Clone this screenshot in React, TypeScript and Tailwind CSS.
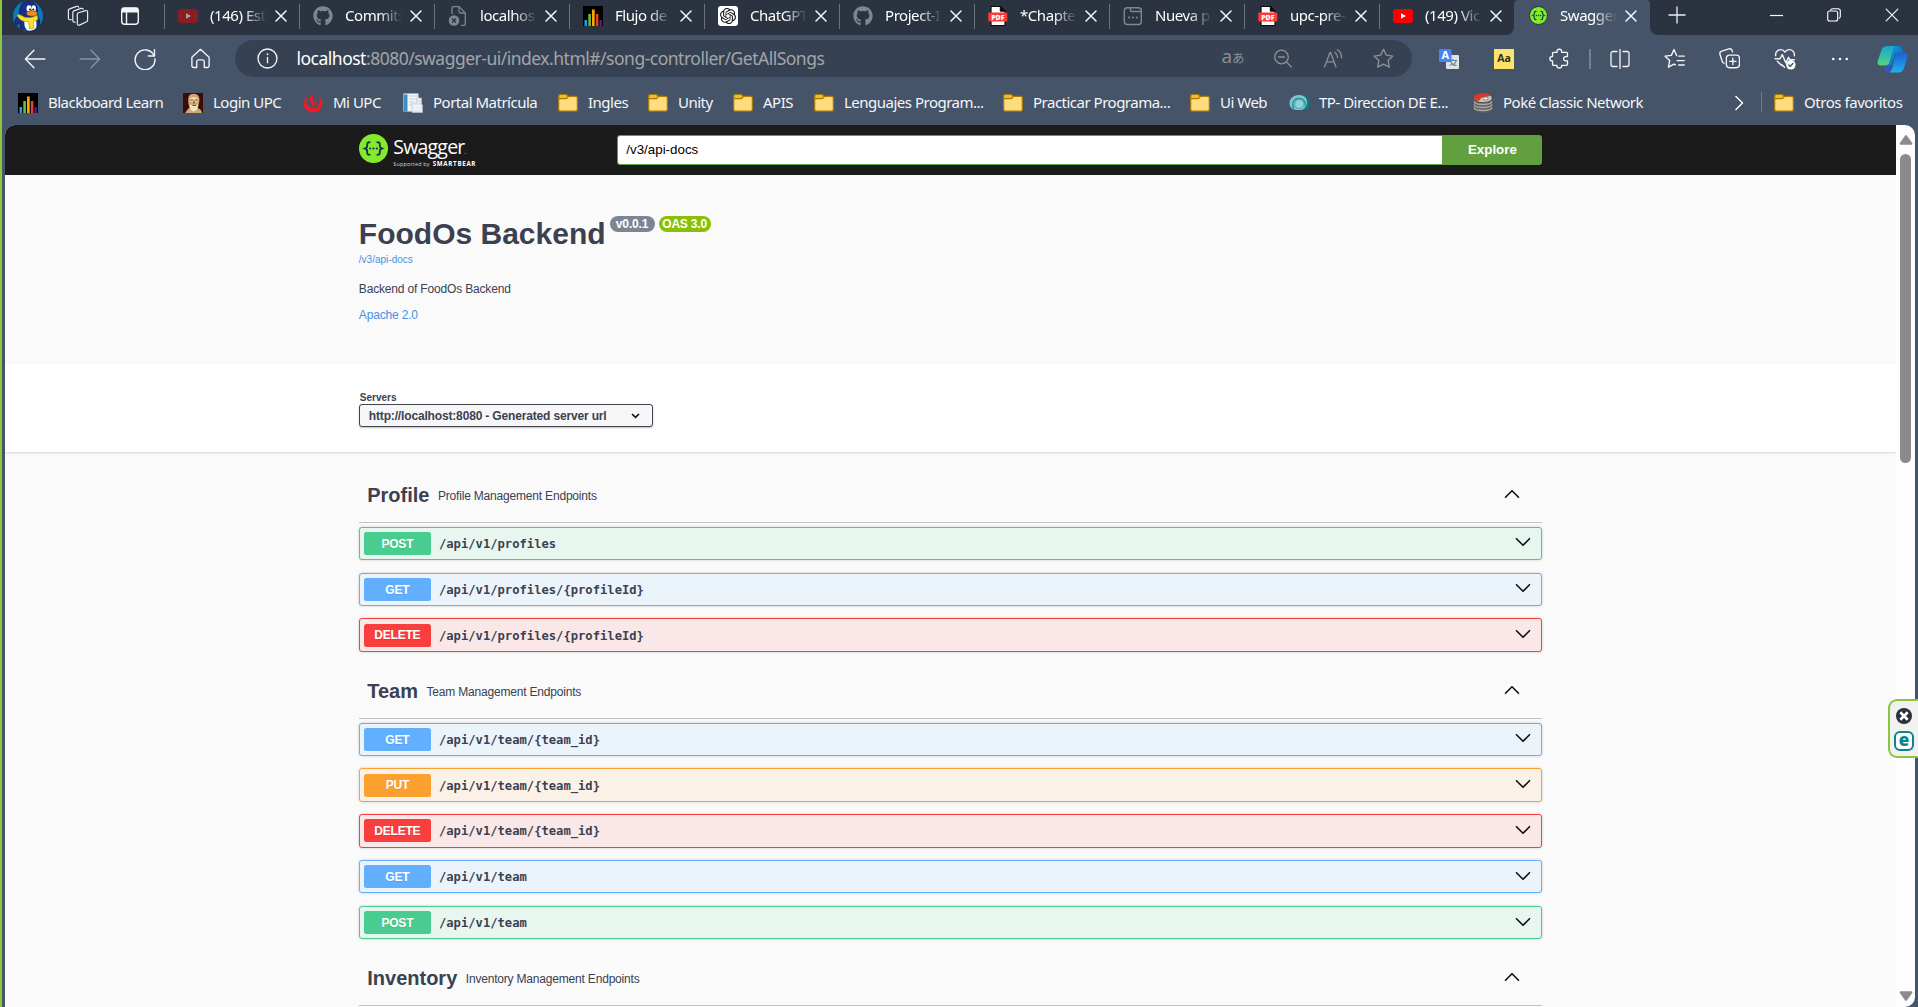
import React from 'react';
import { FaGithub } from 'react-icons/fa';
import { SiOpenai } from 'react-icons/si';

type Kids = { children?: React.ReactNode };

/* ---------- Shared glyphs ---------- */

const Line = ({ size = 20, color = '#f2f4f6', width = 1.3, children }: Kids & { size?: number; color?: string; width?: number }) => (
  <svg className="block shrink-0" width={size} height={size} viewBox="0 0 20 20" fill="none" stroke={color} strokeWidth={width} strokeLinecap="round" strokeLinejoin="round">
    {children}
  </svg>
);

const YouTube = ({ color = '#ff0000', tri = '#ffffff' }) => (
  <svg className="block" width="20" height="20" viewBox="0 0 20 20">
    <rect x="0" y="3" width="20" height="14" rx="3" fill={color} />
    <path d="M8 7.2v5.6l5-2.8z" fill={tri} />
  </svg>
);

const Bars = () => (
  <svg className="block" width="20" height="20" viewBox="0 0 20 20">
    <rect width="20" height="20" fill="#000" />
    <rect x="1.5" y="14" width="2.6" height="6" fill="#1ba0e8" />
    <rect x="5.3" y="8" width="2.6" height="12" fill="#78b833" />
    <rect x="9" y="3.5" width="2.7" height="16.5" fill="#f5a800" />
    <rect x="12.8" y="8" width="2.6" height="12" fill="#e8432a" />
    <rect x="16.4" y="14" width="2.4" height="6" fill="#5b1f8a" />
  </svg>
);

const BrokenPage = () => (
  <svg className="block" width="20" height="20" viewBox="0 0 20 20" fill="none" stroke="#7e868f" strokeWidth="1.3">
    <path d="M4 8V2.2A1.6 1.6 0 0 1 5.600.6H11L17.300 7v11A1.600 1.600 0 0 1 15.700 19.500H13" />
    <path d="M11 .6V5.400A1.600 1.600 0 0 0 12.600 7H17" />
    <circle cx="6" cy="14.500" r="5.300" fill="#7e868f" stroke="none" />
    <path d="M4 12.500l4 4M8 12.500l-4 4" stroke="#2b3440" />
  </svg>
);

const Pdf = () => (
  <svg className="block" width="20" height="20" viewBox="0 0 20 20">
    <path d="M3 .5h9.500L17 5v14.500H3z" fill="#fff" stroke="#0c0c0c" strokeWidth="1.2" />
    <path d="M12.300 .5V5.200H17" fill="#0c0c0c" stroke="#0c0c0c" />
    <rect x="0.300" y="6.600" width="19" height="9" rx="1" fill="#fb3b3b" />
    <text x="9.800" y="13.700" textAnchor="middle" fontFamily="Open Sans, sans-serif" fontWeight="800" fontSize="7" fill="#fff">PDF</text>
  </svg>
);

const NewTabIcon = () => (
  <Line color="#7e868f" width={1.4}>
    <rect x="1.300" y="1.700" width="17" height="16.800" rx="3" />
    <path d="M7.500 2v2a1.500 1.500 0 0 0 1.500 1.500h9" />
    <path d="M6 11.500h.1M9.900 11.500h.1M13.800 11.500h.1" strokeWidth="2" />
  </Line>
);

const SwaggerMark = ({ size = 20, ring = '#85ea2d', ringWidth = 0 }) => (
  <svg className="block shrink-0" width={size} height={size} viewBox="0 0 30 30" fill="none" stroke="#173647" strokeWidth="1.900" strokeLinecap="round">
    <circle cx="15" cy="15" r={15 - ringWidth / 2} fill="#85ea2d" stroke={ring} strokeWidth={ringWidth} />
    <path d="M11 8.500c-2.300 0-2.600 1-2.500 2.600.1 2.300 0 3.300-2 3.900 2 .6 2.100 1.600 2 3.900-.1 1.600.2 2.600 2.500 2.600" />
    <path d="M19 8.500c2.300 0 2.600 1 2.500 2.600-.1 2.300 0 3.300 2 3.900-2 .6-2.100 1.600-2 3.900.1 1.600-.2 2.600-2.500 2.600" />
    <path d="M11.600 15h.01M15 15h.01M18.400 15h.01" strokeWidth="2.300" />
  </svg>
);

const Folder = () => (
  <svg className="block" width="20" height="20" viewBox="0 0 20 20" stroke="#a97a0a" strokeWidth="1.200">
    <path d="M.7 4.500V16.700A1.400 1.400 0 0 0 2.100 18.100H17.900a1.400 1.400 0 0 0 1.400-1.400V4.700A1.400 1.400 0 0 0 17.900 3.300H10.500L8.300 5.500H2" fill="#ffdc7c" />
    <path d="M.7 5.600V3A1.600 1.600 0 0 1 2.300 1.500h6l2 2-2 2.100z" fill="#f3bd2b" />
  </svg>
);

const Close = ({ size = 12, w = 1.5 }) => (
  <svg className="block shrink-0" width={size} height={size} viewBox="0 0 12 12" stroke="#f4f6f8" strokeWidth={w} strokeLinecap="round">
    <path d="M1 1l10 10M11 1L1 11" />
  </svg>
);

/* ---------- Browser tabs ---------- */

const Penguin = () => (
  <svg className="block" width="30" height="30" viewBox="0 0 30 30">
    <defs><clipPath id="pc"><circle cx="15" cy="15" r="15" /></clipPath></defs>
    <g clipPath="url(#pc)">
      <rect width="30" height="30" fill="#0b78bd" />
      <path d="M10 2c3-3 13-2 14 5l1 9c2 3 2 8 0 12H8c-1-2-1-5-.5-7L3 25c-2-3-1-7 3-11 1-2 .5-9 4-12z" fill="#1b2f86" stroke="#0a1640" strokeWidth=".8" />
      <path d="M11 18h12l.5 6c0 4-3 6-6 6s-6-3-6-6z" fill="#fff" />
      <ellipse cx="16" cy="7.500" rx="2.500" ry="3.300" fill="#fff" />
      <ellipse cx="20.700" cy="7.500" rx="2.200" ry="3.300" fill="#fff" />
      <circle cx="17" cy="8.500" r="1" fill="#111" /><circle cx="20.300" cy="8.500" r="1" fill="#111" />
      <ellipse cx="19" cy="12.500" rx="5.500" ry="2.700" fill="#f08c1c" stroke="#8a4a08" strokeWidth=".6" />
      <path d="M4 14c2-1 4 0 7 2 4 1 9 1 13-2l1 4c-1 1.500-3 2-4.500 2l.5 7-4.500 1-1-7.500C10 21.500 5.500 18 4 14z" fill="#fbe22c" stroke="#a88d00" strokeWidth=".6" />
    </g>
  </svg>
);

const tabs: { icon: React.ReactNode; label: string }[] = [
  { icon: <YouTube color="#8a1d24" tri="#a8a3a6" />, label: '(146) Est' },
  { icon: <FaGithub size={20} color="#7e868f" />, label: 'Commits' },
  { icon: <BrokenPage />, label: 'localhos' },
  { icon: <Bars />, label: 'Flujo de' },
  {
    icon: <span className="flex size-5 items-center justify-center rounded-[3px] bg-white"><SiOpenai size={16} color="#111" /></span>,
    label: 'ChatGPT',
  },
  { icon: <FaGithub size={20} color="#7e868f" />, label: 'Project-I' },
  { icon: <Pdf />, label: '*Chapte' },
  { icon: <NewTabIcon />, label: 'Nueva p' },
  { icon: <Pdf />, label: 'upc-pre-' },
  { icon: <YouTube />, label: '(149) Vic' },
];

const TabBody = ({ icon, label }: { icon: React.ReactNode; label: string }) => (
  <>
    <span className="flex w-5 shrink-0 justify-center">{icon}</span>
    <span className="-mt-[2px] ml-3 w-[56px] shrink-0 whitespace-nowrap text-[15px] leading-5 tracking-[-0.450px] text-white [mask-image:linear-gradient(to_right,#000_60%,transparent_102%)]">
      {label}
    </span>
    <span className="ml-[8.500px]"><Close /></span>
  </>
);

const TabStrip = () => (
  <div className="flex h-[35px] bg-[#2a333f]">
    <div className="flex h-[31px] w-[162px] shrink-0 items-center pl-[11px]">
      <Penguin />
      <span className="ml-[24px]">
        <svg className="block" width="22" height="22" viewBox="0 0 22 22" fill="none" stroke="#e8ebee" strokeWidth="1.200" strokeLinejoin="round" strokeLinecap="round">
          <path d="M10.300 9.300a1.500 1.500 0 0 1 1.100-1.500l7.200-2.200a1.500 1.500 0 0 1 2 1.400v8.300a1.700 1.700 0 0 1-1 1.500l-7.200 3.300a1.500 1.500 0 0 1-2.100-1.400z" />
          <path d="M8 17.200c-1.300.2-2.200-.6-2.200-1.700V7.500a1.700 1.700 0 0 1 1.200-1.600l7-2.500c1-.3 1.900 0 2.200.8" />
          <path d="M4.200 14.600c-1.600.5-2.800-.3-2.800-1.600V5.500a1.700 1.700 0 0 1 1.200-1.600l7-2.500c1-.3 1.900 0 2.200.8" />
        </svg>
      </span>
      <span className="ml-[31px]">
        <svg className="block" width="20" height="20" viewBox="0 0 20 20" fill="none" stroke="#f4f6f8" strokeWidth="1.400">
          <rect x="1.700" y="1.900" width="16.600" height="16.400" rx="3" />
          <path d="M2.500 2.500h15v3.300h-15z" fill="#f4f6f8" />
          <path d="M6.500 6v12" />
        </svg>
      </span>
    </div>
    {tabs.map((t, i) => (
      <div key={i} className="flex h-[31px] w-[135px] shrink-0 items-center">
        <span className="mt-[1px] h-[25px] w-px bg-[#6a727c]" />
        <span className="ml-[13px] flex items-center"><TabBody {...t} /></span>
      </div>
    ))}
    <div className="-ml-[8px] flex h-[35px] w-2 shrink-0 items-end bg-[#455468]"><span className="h-full w-2 rounded-br-[8px] bg-[#2a333f]" /></div>
    <div className="h-[35px] w-[136px] shrink-0 rounded-t-[4px] bg-[#455468] pl-[14px]">
      <div className="flex h-[31px] items-center"><TabBody icon={<SwaggerMark size={19} ring="#173647" ringWidth={1.5} />} label="Swagger" /></div>
    </div>
    <div className="h-[35px] w-2 bg-[#455468]"><span className="block h-full w-2 rounded-bl-[8px] bg-[#2a333f]" /></div>
    <div className="flex h-[30px] flex-1 items-center pl-[10px]">
      <svg width="18" height="18" viewBox="0 0 18 18" stroke="#eef0f2" strokeWidth="1.300"><path d="M9 .5v17M.5 9h17" /></svg>
      <svg className="ml-[84px]" width="13" height="13" viewBox="0 0 13 13" stroke="#fff" strokeWidth="1.200"><path d="M0 6.500h13" /></svg>
      <svg className="ml-[44px]" width="14" height="14" viewBox="0 0 14 14" fill="none" stroke="#fff" strokeWidth="1.100">
        <rect x=".7" y="3" width="10" height="10" rx="2" />
        <path d="M3.500 2.500A2 2 0 0 1 5.300.7H11A2.300 2.300 0 0 1 13.300 3v5.500a2 2 0 0 1-1.600 1.900" />
      </svg>
      <span className="ml-[44px]"><Close size={14} w={1.050} /></span>
    </div>
  </div>
);

/* ---------- Address bar ---------- */

const Cell = ({ children }: Kids) => <span className="flex w-[55px] shrink-0 items-center justify-center">{children}</span>;
const PillCell = ({ children }: Kids) => <span className="flex w-[50px] shrink-0 items-center justify-center">{children}</span>;

const Toolbar = () => (
  <div className="flex h-[47px] items-center pl-[5.500px]">
    <Cell><Line size={22}><path d="M19 10H1.500M9 2L1.300 10 9 18" /></Line></Cell>
    <Cell><Line size={22} color="#8692a2"><path d="M1 10h17.500M11 2l7.700 8L11 18" /></Line></Cell>
    <Cell>
      <Line size={22}><path d="M18.300 7.200A9 9 0 1 0 19 10" /><path d="M18.600 1.500v5.700H13" /></Line>
    </Cell>
    <Cell>
      <Line size={21}><path d="M1.800 8.700 10 1.200l8.200 7.500V17a1.600 1.600 0 0 1-1.600 1.600h-3V13a1.700 1.700 0 0 0-1.700-1.700H8.100A1.700 1.700 0 0 0 6.400 13v5.600h-3A1.600 1.600 0 0 1 1.800 17z" /></Line>
    </Cell>
    <div className="ml-[7.500px] flex h-[37px] w-[1177px] shrink-0 items-center rounded-full bg-[#364253] pl-[22px] pr-[4px]">
      <Line size={21}><circle cx="10" cy="10" r="9" /><path d="M10 9v5" /><path d="M10 6h.01" strokeWidth="1.800" /></Line>
      <span className="-mt-px ml-[18.500px] flex-1 whitespace-nowrap text-[17.500px] leading-6 tracking-[-0.500px] text-[#a3a5a8]">
        <span className="text-white">localhost</span>:8080/swagger-ui/index.html#/song-controller/GetAllSongs
      </span>
      <PillCell>
        <span className="-mt-[2px] flex items-baseline whitespace-nowrap font-['Open_Sans','Noto_Sans_CJK_JP',sans-serif] leading-6 text-[#8b9096]"><span className="text-[19px]">a</span><span className="text-[12.500px]">あ</span></span>
      </PillCell>
      <PillCell><Line color="#8b9096"><circle cx="8.500" cy="8" r="6.800" /><path d="M5.500 8h6M13.500 13l5 5" /></Line></PillCell>
      <PillCell>
        <Line color="#8b9096"><path d="M1.500 18 7 3.500h.6L13 18M3.500 12.800h7.600" /><path d="M12 3.500a6 6 0 0 1 2.500 5M14.500.8a9 9 0 0 1 4 8" /></Line>
      </PillCell>
      <PillCell>
        <Line color="#8b9096" size={21}><path d="M10 1.200l2.700 5.600 6.200.9-4.500 4.300 1.100 6.200L10 15.300l-5.500 2.900L5.600 12 1.100 7.700l6.200-.9z" /></Line>
      </PillCell>
    </div>
    <span className="ml-[9.500px] flex">
      <Cell>
        <svg width="20" height="20" viewBox="0 0 20 20">
          <rect x="7" y="6" width="13" height="14" rx="1" fill="#dfe3e8" />
          <path d="M10 11.500h8M14 10v1.500M10.500 16c4 0 6-1.500 6.500-4M11.500 12c1 3 3.500 4.500 6 4.500" stroke="#6b7f93" strokeWidth="1.200" fill="none" />
          <rect width="12.500" height="13" rx="1" fill="#4285f4" />
          <text x="6.200" y="10.300" textAnchor="middle" fontFamily="Open Sans, sans-serif" fontWeight="700" fontSize="11" fill="#fff">A</text>
        </svg>
      </Cell>
      <Cell><span className="flex size-5 items-center justify-center bg-[#ffe26a] font-['Open_Sans',sans-serif] text-[10.500px] font-bold text-[#2b2b2b]">Aa</span></Cell>
      <Cell>
        <Line size={21}><path d="M4.200 4.200h3.400c-.5-1.800.5-3 2.200-3s2.700 1.200 2.200 3h4.800a.8.8 0 0 1 .8.800v3.200c-2-.4-3.700.3-3.700 2s1.700 2.400 3.700 2V15.500a1 1 0 0 1-1 1H12c.4 1.500-.6 2.600-2.200 2.600s-2.600-1.100-2.200-2.600H4.200a.8.8 0 0 1-.8-.8v-3.300c-1.500 0-2.600-.8-2.600-2.200S1.900 8 3.400 8V5a.8.8 0 0 1 .8-.8z" /></Line>
      </Cell>
    </span>
    <span className="ml-[2.500px] h-5 w-[2px] shrink-0 bg-[#76818f]" />
    <span className="ml-[1px] flex items-center">
      <Cell><Line size={20}><path d="M7 2.500H3A2 2 0 0 0 1 4.500v11a2 2 0 0 0 2 2h4M13 2.500h4a2 2 0 0 1 2 2v11a2 2 0 0 1-2 2h-4M10 .5v19" /></Line></Cell>
      <Cell><Line size={21}><path d="M12 7.200 9.500 1.500 7 7 1 7.800l4.400 4.200-1.200 6.300L9.500 15.300l1.300.8M14 7.800h5.300M12.500 12h6.800M14 16.200h5.300" /></Line></Cell>
      <Cell>
        <Line size={21}>
          <rect x="7" y="6.800" width="12.500" height="12" rx="3" /><path d="M13.200 9.800v6M10.200 12.800h6" />
          <path d="M4.800 14.500A3 3 0 0 1 3 12.600L.9 6A2.500 2.500 0 0 1 2.600 3L9.500.9a2.500 2.500 0 0 1 3 1.500l.4 1.300" />
        </Line>
      </Cell>
      <Cell>
        <Line size={22}>
          <path d="M9.500 17.500 7 15M1.500 7C1 3.800 3.300 1.500 6 1.500c1.800 0 3.200.8 4 2.200.8-1.400 2.200-2.200 4-2.200 2.700 0 5 2.300 4.500 5.500M1 9.800h4.500L7.500 6l3.300 7.500 2.400-5 1.300 2.200h4" />
          <path d="M3 12l4 4" />
          <circle cx="15.300" cy="15.300" r="4.300" fill="#fff" stroke="none" />
          <path d="M13.500 15.400l1.300 1.300 2.400-2.500" stroke="#455468" />
        </Line>
      </Cell>
      <Cell><Line size={18}><path d="M2.500 10h.01M10 10h.01M17.500 10h.01" strokeWidth="3" /></Line></Cell>
    </span>
    <svg className="ml-[10px] shrink-0" width="31" height="28" viewBox="0 0 31 28">
      <defs>
        <linearGradient id="ca" x1="0" y1="0" x2="0" y2="1"><stop offset="0" stopColor="#18a4d8" /><stop offset=".5" stopColor="#2fbfa9" /><stop offset="1" stopColor="#5ad27c" /></linearGradient>
        <linearGradient id="cb" x1="0" y1="0" x2="0" y2="1"><stop offset="0" stopColor="#1b5fd0" /><stop offset="1" stopColor="#1fb2f2" /></linearGradient>
        <linearGradient id="cc" x1="0" y1="0" x2="1" y2="1"><stop offset="0" stopColor="#12a8e0" /><stop offset="1" stopColor="#0d4fae" /></linearGradient>
      </defs>
      <path d="M11 1h11c2.500 0 3 2 3.500 4l1 3h-8l-3 9-4 10c-2 0-3-2-3.500-4z" fill="url(#cc)" />
      <path d="M10 1h8.500c-1.800 1-2.500 3-3 5l-3 11c-.6 2-2 3.500-4 3.500H4C1.500 20.500 0 18.500.7 16L4.500 5C5.300 2.500 7.500 1 10 1z" fill="url(#ca)" />
      <path d="M21 27.500h-9c2-1 2.700-3 3.300-5l3-11.500c.5-2 2-3.500 4-3.500H27c2.700 0 4 2 3.400 4.500L27 23c-.8 3-3 4.500-6 4.500z" fill="url(#cb)" />
      <path d="M8 20.500h6l-1 4c-.6 2-1.500 2.700-2.800 2.300z" fill="#2a52e0" />
    </svg>
  </div>
);

/* ---------- Bookmarks ---------- */

const Face = () => (
  <svg className="block" width="20" height="20" viewBox="0 0 20 20">
    <rect width="20" height="20" fill="#3c0c0a" />
    <path d="M2 20l2.500-3.500 2-2L5.500 11C5 8 5 5 6 3c1.500-2.800 7.500-3 9.500 0 1.500 2.500 1 6 0 9l-.5 3 3 2 1 3z" fill="#cfa878" />
    <path d="M7 5c2-1.500 5-1.500 7.500 0v4h-7z" fill="#f0d9ae" />
    <path d="M6.500 11.500c2 1 6.500 1 8.500 0l-1 5c-2 2.500-4.500 2.500-6.500 0z" fill="#f3e2c0" />
    <path d="M7.500 7h2.500M12 7h2.500M11 7.500v3M9.500 12.500h3.500" stroke="#6f4422" strokeWidth="1.200" />
  </svg>
);
const Flame = () => (
  <svg className="block" width="20" height="20" viewBox="0 0 20 20" fill="#ed1c24">
    <path d="M4.500 3C-2 7.500-.5 19 10 19.500 20.500 19 22 7.500 15.500 3c2 4 1.500 8-1 10.500-2.500 2.300-6.500 2.300-9 0C3 11 2.500 7 4.500 3z" />
    <path d="M11 .3C7.500 3 5.500 6 7.500 9c1 1.500 2.300 2.500 2 5.300 2-1 2.800-3 1.700-5.300C10 6.500 9.300 4 11 .3z" />
    <path d="M12.300 6.300c-.6 2 1.500 3.500 0 7C14.500 11.500 14.500 8.500 12.300 6.300z" />
  </svg>
);
const Docs = () => (
  <svg className="block" width="20" height="20" viewBox="0 0 20 20">
    <rect x=".5" y=".5" width="15" height="18" fill="#f3f6f9" />
    <rect x="1" y="1.500" width="3.500" height="17" fill="#3d8fc6" />
    <path d="M6 3h9M6 6h9M6 9h5M6 12h3" stroke="#c3cfda" />
    <path d="M8.500 10h5v-5h5v6l1 1v7.500H9z" fill="#e2e7ec" stroke="#c2c9d0" strokeWidth=".6" />
    <path d="M10 13h8M10 16h8" stroke="#fff" />
  </svg>
);
const TealOrb = () => (
  <svg className="block" width="21" height="20" viewBox="0 0 21 20">
    <path d="M12 3c5-1 8.500 2 8.500 7s-3.500 7-7 7z" fill="#067f82" />
    <path d="M10 2c5 0 8 3 8 7.500 0 4-3 7-6 7.500H8C3 17 .5 14 .5 10S4 2 10 2z" fill="#7cc7cd" />
    <path d="M5 15.500a6.300 6.300 0 1 1 11-2" fill="none" stroke="#2b8f98" strokeWidth="1.300" />
    <circle cx="10.300" cy="11" r="4.600" fill="#8ad4d6" stroke="#3d9fa6" strokeWidth=".8" />
  </svg>
);
const PokeStack = () => (
  <svg className="block" width="20" height="20" viewBox="0 0 20 20">
    <path d="M.7 5v11c0 5 18.600 5 18.600 0V5z" fill="#5f5f5f" />
    <path d="M1 8.500c1 4 17 4 18 0M1 11.500c1 4 17 4 18 0M1 14.500c1 4 17 4 18 0" stroke="#a9a9a9" fill="none" strokeWidth="1.300" />
    <ellipse cx="10" cy="5" rx="9.300" ry="4.600" fill="#c4c4c4" stroke="#333" strokeWidth=".6" />
    <path d="M1 5C1 2 5 .3 10 .3c3.500 0 7 .6 8 2.500l-4.500 1C10 3.300 7.500 4.500 6.500 7.500L3 8z" fill="#d93a22" />
    <ellipse cx="12.500" cy="5.500" rx="2.500" ry="1.500" fill="#fff" stroke="#444" strokeWidth=".6" />
  </svg>
);

const bookmarks: { icon: React.ReactNode; label: string; box: string }[] = [
  { icon: <Bars />, label: 'Blackboard Learn', box: 'w-[165px]' },
  { icon: <Face />, label: 'Login UPC', box: 'w-[120px]' },
  { icon: <Flame />, label: 'Mi UPC', box: 'w-[100px]' },
  { icon: <Docs />, label: 'Portal Matrícula', box: 'w-[155px]' },
  { icon: <Folder />, label: 'Ingles', box: 'w-[90px]' },
  { icon: <Folder />, label: 'Unity', box: 'w-[85px]' },
  { icon: <Folder />, label: 'APIS', box: 'w-[81px]' },
  { icon: <Folder />, label: 'Lenguajes Program...', box: 'w-[189px]' },
  { icon: <Folder />, label: 'Practicar Programa...', box: 'w-[187px]' },
  { icon: <Folder />, label: 'Ui Web', box: 'w-[99px]' },
  { icon: <TealOrb />, label: 'TP- Direccion DE E...', box: 'w-[184px]' },
  { icon: <PokeStack />, label: 'Poké Classic Network', box: 'w-[261px]' },
];

const Bookmarks = () => (
  <div className="flex h-[43px] items-center whitespace-nowrap pb-[1px] pl-4 text-[15px] leading-5 tracking-[-0.500px] text-[#f5f7f9]">
    {bookmarks.map((b) => (
      <div key={b.label} className={`flex shrink-0 items-center ${b.box}`}>
        <span className="w-[30px] shrink-0">{b.icon}</span>
        <span className="-mt-[2px]">{b.label}</span>
      </div>
    ))}
    <svg width="10" height="16" viewBox="0 0 10 16" fill="none" stroke="#fff" strokeWidth="1.400"><path d="M1.500 1l7 7-7 7" /></svg>
    <span className="mb-[3px] ml-[17px] h-5 w-px bg-[#6f7b8b]" />
    <span className="ml-[12px] w-[30px]"><Folder /></span>
    <span className="-mt-[2px] tracking-[-0.450px]">Otros favoritos</span>
  </div>
);

/* ---------- Swagger page ---------- */

type Method = 'POST' | 'GET' | 'PUT' | 'DELETE';

const rowTone: Record<Method, string> = {
  POST: 'border-[#49cc90] bg-[#e8f6f0]',
  GET: 'border-[#61affe] bg-[#ebf3fb]',
  PUT: 'border-[#fca130] bg-[#fbf1e6]',
  DELETE: 'border-[#f93e3e] bg-[#fae7e7]',
};
const badgeTone: Record<Method, string> = {
  POST: 'bg-[#49cc90]',
  GET: 'bg-[#61affe]',
  PUT: 'bg-[#fca130]',
  DELETE: 'bg-[#f93e3e]',
};

const Chevron = ({ up = false }) => (
  <svg className="block shrink-0" width="16" height="10" viewBox="0 0 16 10" fill="none" stroke="#111" strokeWidth="1.600" strokeLinejoin="round" strokeLinecap="round">
    <path d={up ? 'M1.500 8.300 8 1.700l6.500 6.600' : 'M1.500 1.700 8 8.300l6.500-6.600'} />
  </svg>
);

const Operation = ({ method, path }: { method: Method; path: string }) => (
  <div className={`mb-[12.500px] flex h-[33.330px] items-center rounded-[3px] border pl-[4.200px] pr-[10px] shadow-[0_0_3px_rgba(0,0,0,0.19)] ${rowTone[method]}`}>
    <span className={`flex h-[23px] w-[66.670px] items-center justify-center rounded-[2.500px] pt-[0.600px] text-[12px] font-bold tracking-[-0.200px] text-white [text-shadow:0_1px_0_rgba(0,0,0,0.1)] ${badgeTone[method]}`}>
      {method}
    </span>
    <span className="ml-[8.300px] mt-[1.300px] flex-1 font-['DejaVu_Sans_Mono',monospace] text-[12.170px] font-bold">{path}</span>
    <span className="mb-[2px]"><Chevron /></span>
  </div>
);

const Section = ({ title, note, ops = [] }: { title: string; note: string; ops?: [Method, string][] }) => (
  <section>
    <div className="mb-[3.900px] flex h-[54.430px] items-center border-b border-[#3b4151]/30 pl-[8.400px] pr-[22px]">
      <h3 className="text-[20px] font-bold leading-6">{title}</h3>
      <p className="ml-[8.500px] flex-1 pt-[1px] text-[12px] leading-4 tracking-[-0.190px]">{note}</p>
      <span className="mb-[3px]"><Chevron up /></span>
    </div>
    {ops.map(([m, p], i) => <Operation key={i} method={m} path={p} />)}
  </section>
);

const SwaggerPage = () => (
  <div className="h-full flex-1 overflow-hidden bg-[#fafafa] font-['Liberation_Sans',sans-serif] text-[#3b4151]">
    <div className="h-[50px] bg-[#1b1b1b]">
      <div className="mx-auto flex h-full w-[1183.300px] items-center">
        <div className="flex w-[258px] shrink-0">
          <span className="-mt-px"><SwaggerMark size={29} /></span>
          <div className="-mt-[2px] ml-[5.500px] flex h-[33px] flex-col whitespace-nowrap font-['Open_Sans',sans-serif] text-white">
            <span className="text-[19.500px] leading-7 tracking-[-0.800px]">Swagger<span className="text-[6px] leading-none">.</span></span>
            <span className="-mt-[1px] flex items-baseline text-[5.400px] leading-[8px] tracking-[0.200px] text-[#d8d8d8]">
              Supported by<b className="ml-[3px] text-[6.200px] leading-[6px] tracking-[0.700px] text-white">SMARTBEAR</b>
            </span>
          </div>
        </div>
        <div className="flex h-[30px] flex-1">
          <div className="flex flex-1 items-center rounded-l-[3px] border border-[#62a03f] bg-white pl-[8.500px] text-[13.330px] text-black">/v3/api-docs</div>
          <div className="flex w-[99.500px] items-center justify-center rounded-r-[3px] bg-[#62a03f] text-[13.330px] font-bold text-white">Explore</div>
        </div>
      </div>
    </div>

    <div className="h-[189px]">
      <div className="mx-auto w-[1183.300px] pt-[41px]">
        <div className="flex items-start">
          <h2 className="pt-px text-[30px] font-bold leading-[33px]">FoodOs Backend</h2>
          <span className="ml-[4px] flex h-4 w-[45px] items-center justify-center rounded-full bg-[#7d8492] text-[12px] font-bold tracking-[-0.150px] text-white">v0.0.1</span>
          <span className="ml-1 flex h-4 w-[52px] items-center justify-center whitespace-nowrap rounded-full bg-[#89bf04] text-[12px] font-bold tracking-[-0.200px] text-white">OAS 3.0</span>
        </div>
        <p className="mt-[3px] text-[10px] leading-[14px] text-[#4990e2]">/v3/api-docs</p>
        <p className="mt-[14px] text-[12px] leading-4 tracking-[-0.170px]">Backend of FoodOs Backend</p>
        <p className="mt-[10px] text-[12px] leading-4 tracking-[-0.170px] text-[#4990e2]">Apache 2.0</p>
      </div>
    </div>

    <div className="h-[88px] bg-white shadow-[0_1px_2px_rgba(0,0,0,0.15)]">
      <div className="mx-auto w-[1183.300px] pt-[28px]">
        <p className="pl-[1px] text-[10px] font-bold leading-3">Servers</p>
        <div className="flex h-[23px] w-[294px] items-center rounded-[3px] border-[1.500px] border-[#41444e] bg-[#f7f7f7] pl-[9px] pr-[12px] text-[12px] font-bold tracking-[-0.160px] shadow-[0_1px_2px_rgba(0,0,0,0.25)]">
          <span className="flex-1">http://localhost:8080 - Generated server url</span>
          <svg width="9" height="6" viewBox="0 0 9 6" fill="none" stroke="#111" strokeWidth="1.700"><path d="M1 1l3.500 3.400L8 1" /></svg>
        </div>
      </div>
    </div>

    <div className="mx-auto w-[1183.300px] pt-[16.500px]">
      <Section title="Profile" note="Profile Management Endpoints" ops={[['POST', '/api/v1/profiles'], ['GET', '/api/v1/profiles/{profileId}'], ['DELETE', '/api/v1/profiles/{profileId}']]} />
      <Section title="Team" note="Team Management Endpoints" ops={[['GET', '/api/v1/team/{team_id}'], ['PUT', '/api/v1/team/{team_id}'], ['DELETE', '/api/v1/team/{team_id}'], ['GET', '/api/v1/team'], ['POST', '/api/v1/team']]} />
      <Section title="Inventory" note="Inventory Management Endpoints" />
    </div>
  </div>
);

const Scrollbar = () => (
  <div className="flex w-[19px] shrink-0 flex-col items-center bg-[#fdfdfd] pt-[10px]">
    <svg width="14" height="10" viewBox="0 0 14 10"><path d="M6 .8 .8 8a1.100 1.100 0 0 0 .9 1.700h10.600a1.100 1.100 0 0 0 .9-1.700L8 .8a1.200 1.200 0 0 0-2 0z" fill="#8b8b8b" /></svg>
    <span className="mt-[9px] h-[309px] w-[11px] rounded-full bg-[#8b8b8b]" />
    <svg className="mt-auto mb-[6px]" width="14" height="10" viewBox="0 0 14 10"><path d="M6 9.200 .8 2A1.100 1.100 0 0 1 1.700.3h10.600a1.100 1.100 0 0 1 .9 1.700L8 9.200a1.200 1.200 0 0 1-2 0z" fill="#8b8b8b" /></svg>
  </div>
);

const SideWidget = () => (
  <div className="absolute right-0 top-[699px] flex h-[59px] w-[30px] flex-col items-center gap-[6.500px] rounded-l-[9px] border-2 border-r-0 border-[#8cc63f] bg-[#f1f1f1] pt-[7px]">
    <svg className="shrink-0" width="16" height="16" viewBox="0 0 16 16"><circle cx="8" cy="8" r="8" fill="#2c303b" /><path d="M4.300 4.300l7.400 7.400M11.700 4.300l-7.400 7.400" stroke="#fff" strokeWidth="2.700" /></svg>
    <span className="flex size-5 shrink-0 items-center justify-center rounded-[6px] border-2 border-[#0b8390] bg-white pb-[2px] font-['Open_Sans',sans-serif] text-[17px] font-extrabold leading-none text-[#0b8390]">e</span>
  </div>
);

export default function App() {
  return (
    <div className="relative flex h-[1007px] w-[1918px] flex-col overflow-hidden border-l-2 border-[#8cc63f] bg-[#455468] font-['Noto_Sans','Open_Sans',sans-serif]">
      <TabStrip />
      <Toolbar />
      <Bookmarks />
      <div className="ml-[3px] mr-[3px] flex min-h-0 flex-1 overflow-hidden rounded-t-[10px] rounded-br-[10px]">
        <SwaggerPage />
        <Scrollbar />
      </div>
      <SideWidget />
    </div>
  );
}
